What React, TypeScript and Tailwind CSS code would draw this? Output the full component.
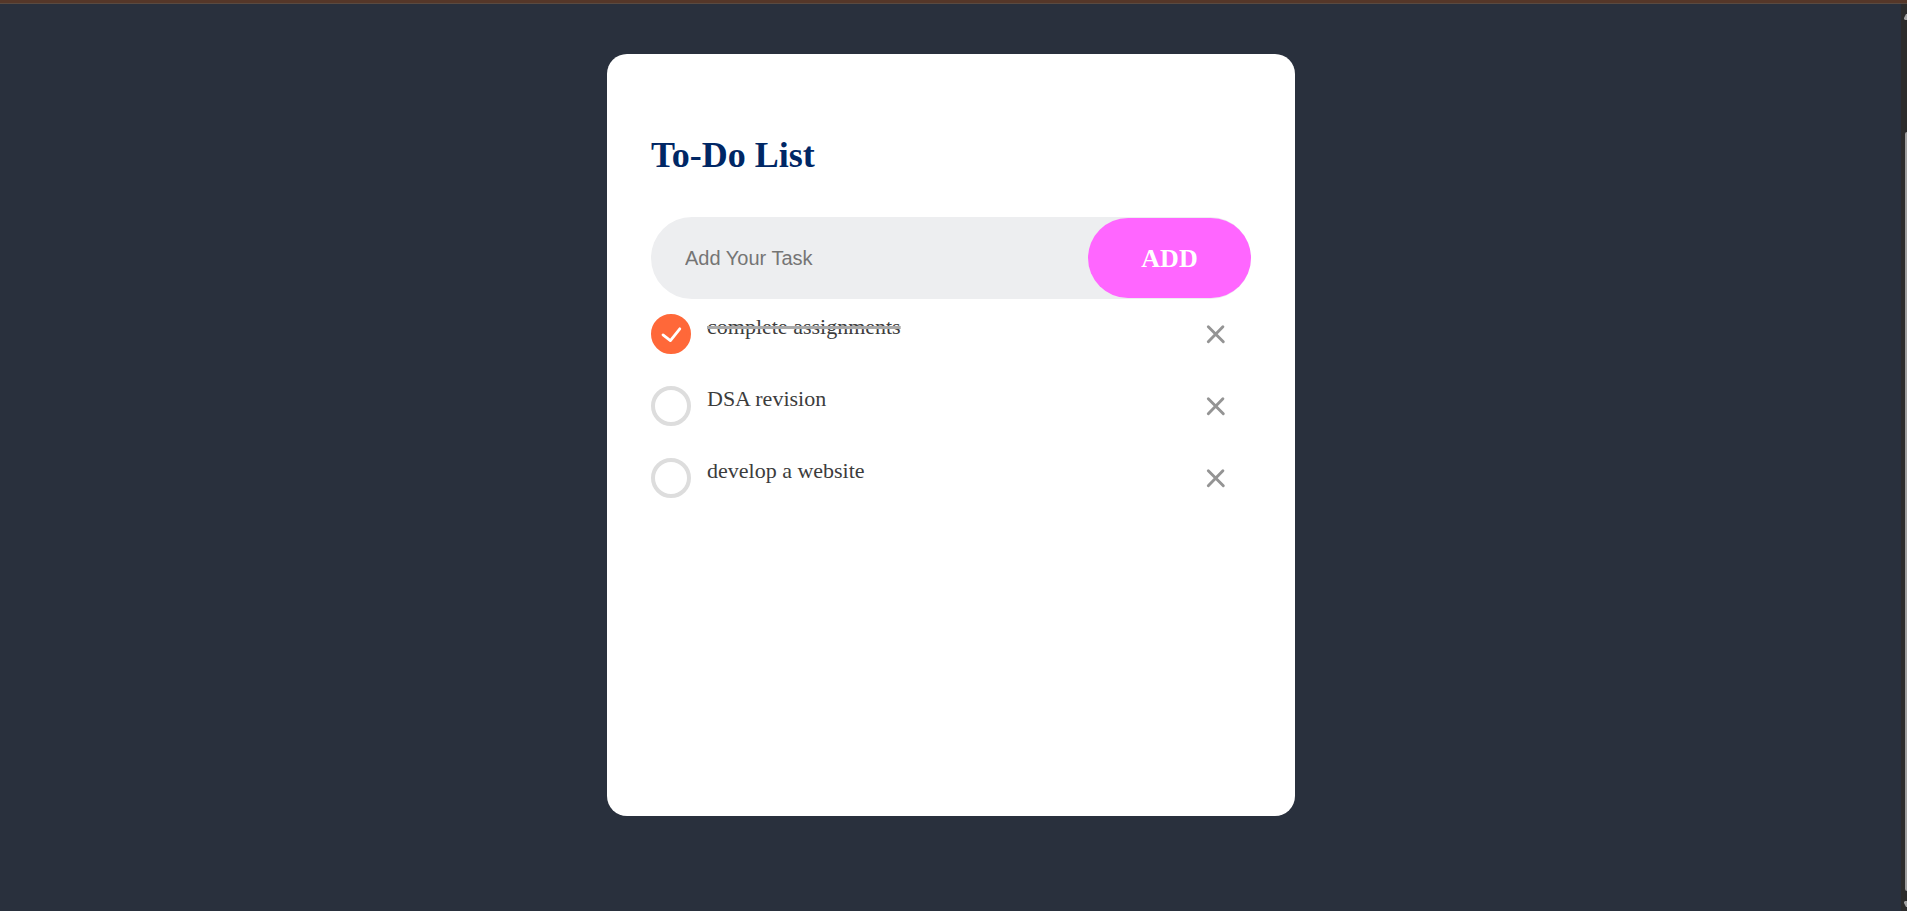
import { useState } from "react";
import type { FormEvent } from "react";

type Task = { id: number; text: string; done: boolean };

const initialTasks: Task[] = [
  { id: 1, text: "complete assignments", done: true },
  { id: 2, text: "DSA revision", done: false },
  { id: 3, text: "develop a website", done: false },
];

function TaskRow({
  task,
  onToggle,
  onRemove,
}: {
  task: Task;
  onToggle: () => void;
  onRemove: () => void;
}) {
  const inputId = `task-${task.id}`;
  return (
    <li className="flex h-10 items-center">
      <span className="grid size-10 shrink-0 place-items-center">
        <input
          id={inputId}
          type="checkbox"
          checked={task.done}
          onChange={onToggle}
          className="peer col-start-1 row-start-1 size-10 cursor-pointer appearance-none rounded-full border-4 border-[#dddddd] checked:border-[#ff6839] checked:bg-[#ff6839]"
        />
        <svg
          viewBox="0 0 40 40"
          aria-hidden="true"
          className="pointer-events-none invisible col-start-1 row-start-1 size-10 peer-checked:visible"
          fill="none"
          stroke="white"
          strokeWidth="2.8"
          strokeLinecap="round"
          strokeLinejoin="round"
        >
          <path d="M12 20.9L19.4 26.6L28.8 14.8" />
        </svg>
      </span>
      <label
        htmlFor={inputId}
        className={
          task.done
            ? "ml-4 h-10 flex-1 cursor-pointer text-[22px] leading-[26px] text-[#3c3c3c] line-through decoration-[#a9a9a9] decoration-3"
            : "ml-4 h-10 flex-1 cursor-pointer text-[22px] leading-[26px] text-[#3c3c3c]"
        }
      >
        {task.text}
      </label>
      <button
        type="button"
        aria-label={`Remove ${task.text}`}
        onClick={onRemove}
        className="mr-[15px] grid size-10 cursor-pointer place-items-center"
      >
        <svg
          viewBox="0 0 20 20"
          aria-hidden="true"
          className="size-5"
          fill="none"
          stroke="#949494"
          strokeWidth="2.9"
          strokeLinecap="round"
        >
          <path d="M2.3 2.7L17.3 17.7M16.9 2.7L2.3 17.7" />
        </svg>
      </button>
    </li>
  );
}

export default function App() {
  const [tasks, setTasks] = useState<Task[]>(initialTasks);
  const [draft, setDraft] = useState("");

  const addTask = (event: FormEvent) => {
    event.preventDefault();
    const text = draft.trim();
    if (!text) return;
    setTasks([...tasks, { id: Date.now(), text, done: false }]);
    setDraft("");
  };

  return (
    <div className="flex min-h-screen flex-col bg-[#29303d] font-['Liberation_Serif',serif]">
      <div className="h-1 border-b border-[#594a41] bg-[#553729]" />
      <div className="flex flex-1">
        <main className="flex-1 pt-[50px] pr-4 pb-12 pl-[17px]">
          <section className="mx-auto min-h-[762px] max-w-[688px] rounded-[20px] bg-white px-11 pt-20">
            <h1 className="text-4xl leading-[42px] font-bold text-[#002765]">To-Do List</h1>
            <form
              onSubmit={addTask}
              className="mt-[41px] flex items-center rounded-full bg-[#edeef0]"
            >
              <input
                type="text"
                aria-label="Add Your Task"
                placeholder="Add Your Task"
                value={draft}
                onChange={(event) => setDraft(event.target.value)}
                className="h-[82px] min-w-0 flex-1 bg-transparent pl-[34px] font-['Liberation_Sans',sans-serif] text-xl text-[#3c3c3c] outline-none placeholder:text-[#757575]"
              />
              <button
                type="submit"
                className="h-20 w-[163px] shrink-0 cursor-pointer rounded-full bg-[#ff66ff] text-[26px] font-bold text-white"
              >
                ADD
              </button>
            </form>
            <ul className="flex flex-col gap-8 pt-[15px]">
              {tasks.map((task) => (
                <TaskRow
                  key={task.id}
                  task={task}
                  onToggle={() =>
                    setTasks(tasks.map((t) => (t.id === task.id ? { ...t, done: !t.done } : t)))
                  }
                  onRemove={() => setTasks(tasks.filter((t) => t.id !== task.id))}
                />
              ))}
            </ul>
          </section>
        </main>
        <div
          aria-hidden="true"
          className="flex w-1.5 flex-col items-end overflow-hidden bg-[#2c2c2c] pt-2.5"
        >
          <svg viewBox="0 0 3 6" className="h-1.5 w-[3px]" fill="#a5a5a5">
            <path d="M3 0L2 0L0 4V5L1 6H3Z" />
          </svg>
          <div className="mt-28 mb-2.5 w-0.5 flex-1 rounded-l-full bg-[#9f9f9f]" />
          <svg viewBox="0 0 3 6" className="mb-1 h-1.5 w-[3px]" fill="#a5a5a5">
            <path d="M3 6L2 6L0 2V1L1 0H3Z" />
          </svg>
        </div>
      </div>
    </div>
  );
}
